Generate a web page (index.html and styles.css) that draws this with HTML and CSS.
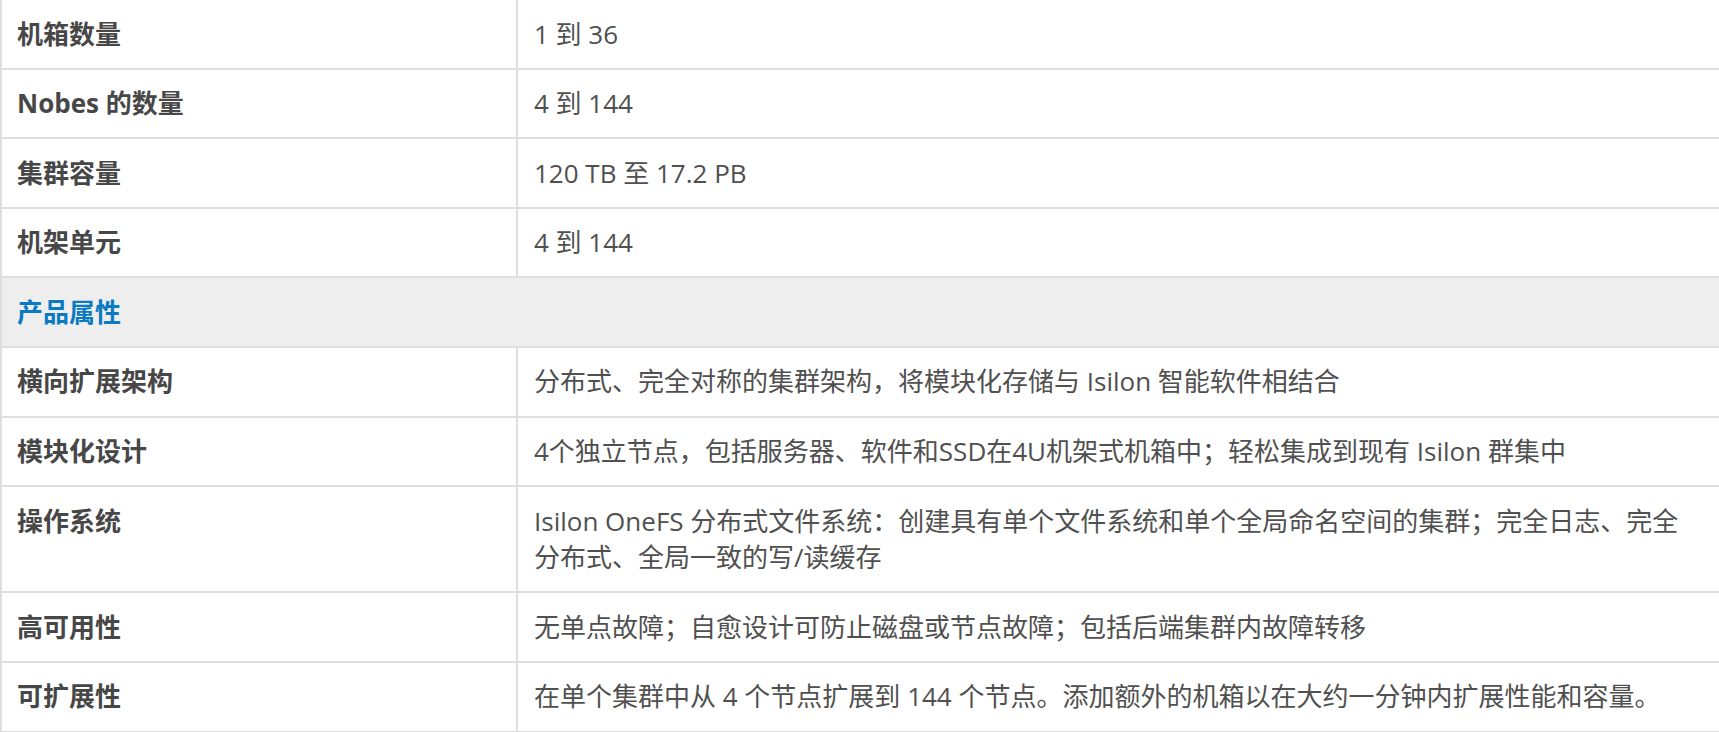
FILE: index.html
```html
<!DOCTYPE html>
<html lang="zh-CN">
<head>
<meta charset="utf-8">
<title>规格</title>
<link rel="stylesheet" href="styles.css">
</head>
<body>
<table class="spec">
  <colgroup><col class="col-label"><col class="col-value"></colgroup>
  <tbody>
    <tr><td class="label">机箱数量</td><td class="value">1 到 36</td></tr>
    <tr><td class="label">Nobes 的数量</td><td class="value">4 到 144</td></tr>
    <tr><td class="label">集群容量</td><td class="value">120 TB 至 17.2 PB</td></tr>
    <tr><td class="label">机架单元</td><td class="value">4 到 144</td></tr>
    <tr class="section"><td class="section-title" colspan="2">产品属性</td></tr>
    <tr><td class="label">横向扩展架构</td><td class="value">分布式、完全对称的集群架构，将模块化存储与 Isilon 智能软件相结合</td></tr>
    <tr><td class="label">模块化设计</td><td class="value">4个独立节点，包括服务器、软件和SSD在4U机架式机箱中；轻松集成到现有 Isilon 群集中</td></tr>
    <tr><td class="label">操作系统</td><td class="value">Isilon OneFS 分布式文件系统：创建具有单个文件系统和单个全局命名空间的集群；完全日志、完全分布式、全局一致的写/读缓存</td></tr>
    <tr><td class="label">高可用性</td><td class="value">无单点故障；自愈设计可防止磁盘或节点故障；包括后端集群内故障转移</td></tr>
    <tr><td class="label">可扩展性</td><td class="value">在单个集群中从 4 个节点扩展到 144 个节点。添加额外的机箱以在大约一分钟内扩展性能和容量。</td></tr>
  </tbody>
</table>
</body>
</html>
```
FILE: styles.css
```css
html, body {
  margin: 0;
  padding: 0;
  background: #ffffff;
  overflow: hidden;
}
.spec {
  width: 100%;
  table-layout: fixed;
  border-collapse: separate;
  border-spacing: 0;
  font-family: "Open Sans", "Noto Sans CJK SC", sans-serif;
  font-size: 26px;
  line-height: 36.6px;
  color: #505050;
}
.col-label { width: 516px; }
.spec td {
  box-sizing: border-box;
  padding: 15.5px 16px 15.5px 15px;
  border-left: 2px solid #dedede;
  border-bottom: 2px solid #dedede;
  vertical-align: top;
  text-align: left;
}
.spec .label {
  font-weight: 700;
  color: #474747;
}
.spec .value {
  padding-left: 16px;
}
.spec .section-title {
  background: #eeeeee;
  color: #0a7ac2;
  font-weight: 700;
}
```
